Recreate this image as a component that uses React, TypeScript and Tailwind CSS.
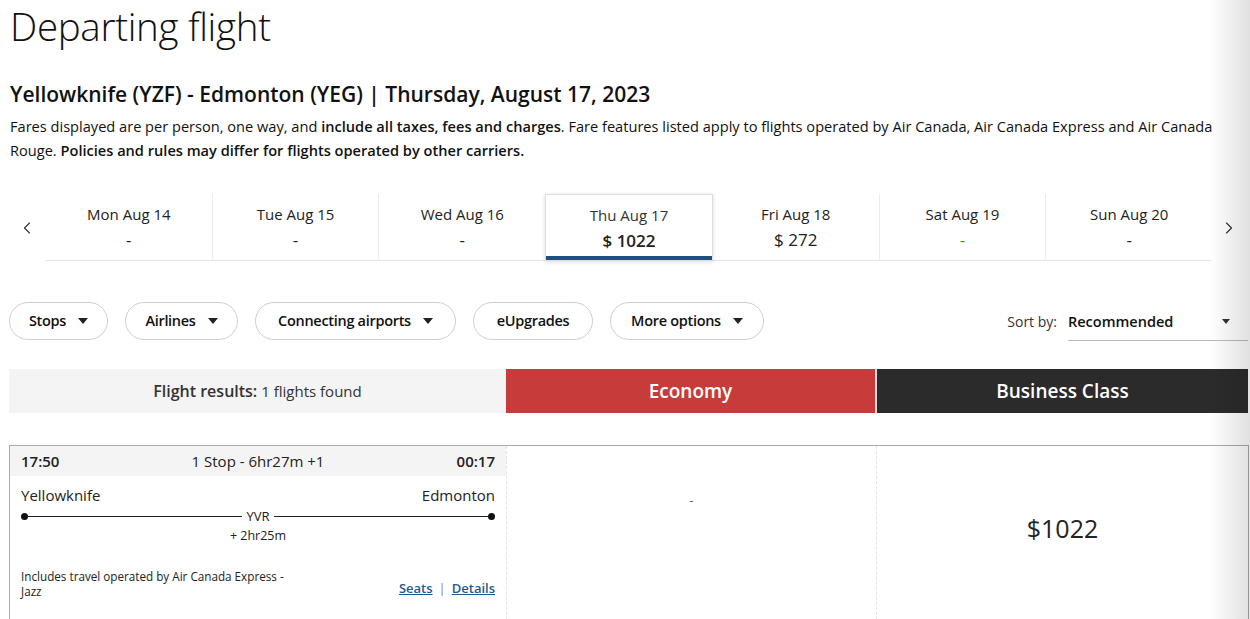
import { ChevronLeft, ChevronRight } from "lucide-react";

const days = [
  { label: "Mon Aug 14", price: "-" },
  { label: "Tue Aug 15", price: "-" },
  { label: "Wed Aug 16", price: "-" },
  { label: "Thu Aug 17", price: "$ 1022", active: true },
  { label: "Fri Aug 18", price: "$ 272" },
  { label: "Sat Aug 19", price: "-", green: true },
  { label: "Sun Aug 20", price: "-" },
];

const filters = [
  { label: "Stops", caret: true, w: "w-[99px]" },
  { label: "Airlines", caret: true, w: "w-[113px]" },
  { label: "Connecting airports", caret: true, w: "w-[201px]" },
  { label: "eUpgrades", caret: false, w: "w-[120px]" },
  { label: "More options", caret: true, w: "w-[154px]" },
];

function Caret() {
  return (
    <svg width="10" height="6" viewBox="0 0 10 6" className="ml-3">
      <path d="M0 0h10L5 6z" fill="#222" />
    </svg>
  );
}

function DateStrip() {
  return (
    <div className="flex items-stretch mt-[32px] h-[67px]">
      <div className="w-[46px] flex items-center justify-center pl-[8px]">
        <ChevronLeft size={20} strokeWidth={1.4} className="text-[#333]" />
      </div>
      <div className="flex-1 flex border-b border-[#e6e6e6]">
        {days.map((d, i) =>
          d.active ? (
            <div
              key={d.label}
              className="flex-1 flex flex-col items-center bg-white border border-[#ddd] shadow-[0_1px_4px_rgba(0,0,0,0.15)] relative -mb-px"
            >
              <div className="pt-[9px] text-[15px] text-[#333]">{d.label}</div>
              <div className="text-[17px] font-semibold text-[#222] mt-[1px]">{d.price}</div>
              <div className="absolute left-0 right-0 bottom-0 h-[4px] bg-[#1f4f7c]" />
            </div>
          ) : (
            <div
              key={d.label}
              className={
                "flex-1 flex flex-col items-center" +
                (i < days.length - 1 && !days[i + 1].active ? " border-r border-[#ececec]" : "")
              }
            >
              <div className="pt-[9px] text-[15px] text-[#222]">{d.label}</div>
              <div className={"text-[17px] mt-[1px] " + (d.green ? "text-[#2f9a1f]" : "text-[#222]")}>
                {d.price}
              </div>
            </div>
          )
        )}
      </div>
      <div className="w-[38px] flex items-center justify-center pr-[4px]">
        <ChevronRight size={20} strokeWidth={1.4} className="text-[#333]" />
      </div>
    </div>
  );
}

function Filters() {
  return (
    <div className="flex items-start mt-[41px] pl-[9px] pr-[2px]">
      <div className="flex gap-[17px]">
        {filters.map((f) => (
          <div
            key={f.label}
            className={
              f.w +
              " h-[38px] rounded-full border border-[#cfcfcf] flex items-center justify-center text-[14.5px] font-semibold text-[#111] tracking-[-0.3px]"
            }
          >
            {f.label}
            {f.caret && <Caret />}
          </div>
        ))}
      </div>
      <div className="ml-auto flex items-center h-[38px] text-[14px]">
        <span className="text-[#333] mr-[11px]">Sort by:</span>
        <div className="w-[180px] h-[38px] flex items-center border-b border-[#bbb] translate-y-[1px] pr-[18px]">
          <span className="font-semibold text-[#111] text-[14.5px]">Recommended</span>
          <svg width="8" height="5" viewBox="0 0 8 5" className="ml-auto">
            <path d="M0 0h8L4 5z" fill="#333" />
          </svg>
        </div>
      </div>
    </div>
  );
}

function ResultsHeader() {
  return (
    <div className="flex mt-[29px] ml-[9px] mr-[2px] h-[44px]">
      <div className="w-[497px] bg-[#f4f4f4] flex items-center justify-center text-[15px] text-[#333]">
        <span className="font-semibold text-[16px] mr-[4px]">Flight results:</span>1 flights found
      </div>
      <div className="w-[371px] bg-[#c73b3b] flex items-center justify-center text-white font-semibold text-[19px] border-r-2 border-[#ddd]">
        Economy
      </div>
      <div className="flex-1 bg-[#2b2b2b] flex items-center justify-center text-white font-semibold text-[19px]">
        Business Class
      </div>
    </div>
  );
}

function FlightCard() {
  return (
    <div className="mt-[32px] ml-[9px] mr-[1px] border border-[#aaa] border-b-0 flex h-[200px]">
      <div className="w-[497px] border-r border-dashed border-[#e3e3e3] flex flex-col">
        <div className="h-[30px] bg-[#f4f4f4] flex items-center px-[11px] text-[15px] text-[#222]">
          <span className="font-semibold w-[80px]">17:50</span>
          <span className="flex-1 text-center">1 Stop - 6hr27m +1</span>
          <span className="font-semibold w-[80px] text-right">00:17</span>
        </div>
        <div className="px-[11px] pt-[8px] text-[15px] text-[#222]">
          <div className="flex justify-between">
            <span>Yellowknife</span>
            <span>Edmonton</span>
          </div>
          <div className="flex items-center mt-[1px] h-[18px]">
            <span className="w-[7px] h-[7px] rounded-full bg-[#111]" />
            <span className="flex-1 h-px bg-[#222]" />
            <span className="px-[4px] text-[13px] leading-none">YVR</span>
            <span className="flex-1 h-px bg-[#222]" />
            <span className="w-[7px] h-[7px] rounded-full bg-[#111]" />
          </div>
          <div className="text-center text-[12.5px] mt-[1px]">+ 2hr25m</div>
          <div className="flex items-end justify-between mt-[24px]">
            <div className="text-[11.7px] leading-[15px] w-[290px]">
              Includes travel operated by Air Canada Express -<br />Jazz
            </div>
            <div className="text-[13px] font-semibold text-[#1e5a8f] mb-[1px]">
              <span className="underline">Seats</span>
              <span className="text-[#888] font-normal mx-[6px]">|</span>
              <span className="underline">Details</span>
            </div>
          </div>
        </div>
      </div>
      <div className="w-[370px] border-r border-dashed border-[#e3e3e3] flex justify-center pt-[46px] text-[12px] text-[#555]">
        -
      </div>
      <div className="flex-1 flex justify-center pt-[64px] text-[25px] text-[#222]">$1022</div>
    </div>
  );
}

export default function App() {
  return (
    <div
      className="relative w-[1250px] h-[619px] overflow-hidden bg-white text-[#111]"
      style={{ fontFamily: '"Open Sans", "Noto Sans", Arial, sans-serif' }}
    >
      <h1 className="px-[10px] pt-[2px] text-[38.5px] font-light leading-[48px] tracking-[-0.3px]">Departing flight</h1>
      <h2 className="px-[10px] mt-[30px] text-[21px] font-semibold leading-[28px]">
        Yellowknife (YZF) - Edmonton (YEG) | Thursday, August 17, 2023
      </h2>
      <p className="pl-[10px] pr-[6px] mt-[6px] text-[14.6px] leading-[24px] text-[#111]">
        Fares displayed are per person, one way, and <span className="font-semibold">include all taxes, fees and charges</span>. Fare
        features listed apply to flights operated by Air Canada, Air Canada Express and Air Canada Rouge.{" "}
        <span className="font-semibold">Policies and rules may differ for flights operated by other carriers.</span>
      </p>
      <DateStrip />
      <Filters />
      <ResultsHeader />
      <FlightCard />
      <div className="pointer-events-none absolute top-0 right-0 w-[40px] h-full bg-gradient-to-r from-transparent to-[rgba(0,0,0,0.12)]" />
    </div>
  );
}
